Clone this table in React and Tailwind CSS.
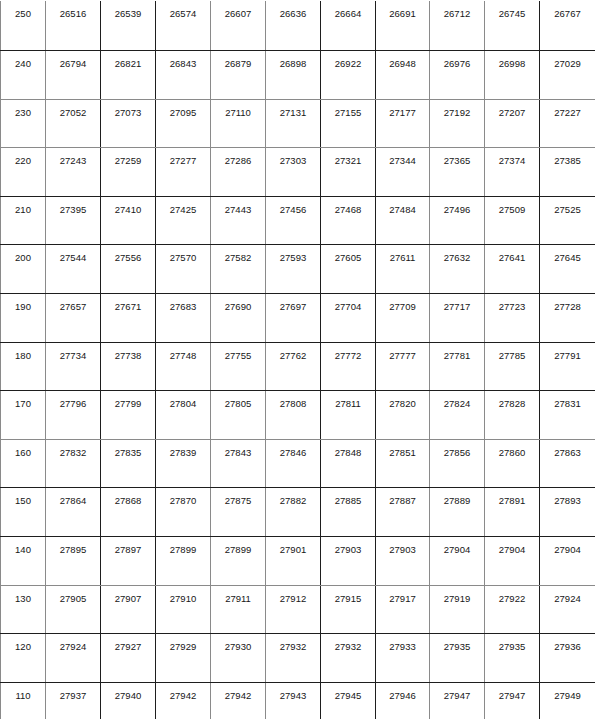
import React from "react";

const data = [
  ["250", "26516", "26539", "26574", "26607", "26636", "26664", "26691", "26712", "26745", "26767"],
  ["240", "26794", "26821", "26843", "26879", "26898", "26922", "26948", "26976", "26998", "27029"],
  ["230", "27052", "27073", "27095", "27110", "27131", "27155", "27177", "27192", "27207", "27227"],
  ["220", "27243", "27259", "27277", "27286", "27303", "27321", "27344", "27365", "27374", "27385"],
  ["210", "27395", "27410", "27425", "27443", "27456", "27468", "27484", "27496", "27509", "27525"],
  ["200", "27544", "27556", "27570", "27582", "27593", "27605", "27611", "27632", "27641", "27645"],
  ["190", "27657", "27671", "27683", "27690", "27697", "27704", "27709", "27717", "27723", "27728"],
  ["180", "27734", "27738", "27748", "27755", "27762", "27772", "27777", "27781", "27785", "27791"],
  ["170", "27796", "27799", "27804", "27805", "27808", "27811", "27820", "27824", "27828", "27831"],
  ["160", "27832", "27835", "27839", "27843", "27846", "27848", "27851", "27856", "27860", "27863"],
  ["150", "27864", "27868", "27870", "27875", "27882", "27885", "27887", "27889", "27891", "27893"],
  ["140", "27895", "27897", "27899", "27899", "27901", "27903", "27903", "27904", "27904", "27904"],
  ["130", "27905", "27907", "27910", "27911", "27912", "27915", "27917", "27919", "27922", "27924"],
  ["120", "27924", "27927", "27929", "27930", "27932", "27932", "27933", "27935", "27935", "27936"],
  ["110", "27937", "27940", "27942", "27942", "27943", "27945", "27946", "27947", "27947", "27949"],
];

const cols = [
  "w-[45px] border-l border-[#8a8a8a]",
  "w-[55px] border-l border-[#8a8a8a]",
  "w-[55px] border-l border-[#1e1e1e]",
  "w-[55px] border-l border-[#1e1e1e]",
  "w-[55px] border-l border-[#8a8a8a]",
  "w-[55px] border-l border-[#8a8a8a]",
  "w-[55px] border-l border-[#1e1e1e]",
  "w-[54px] border-l border-[#1e1e1e]",
  "w-[55px] border-l border-[#8a8a8a]",
  "w-[55px] border-l border-[#8a8a8a]",
  "w-[56px] border-l border-[#1e1e1e]",
];

const rows = [
  "h-[50px] border-t border-transparent",
  "h-[49px] border-t border-[#1e1e1e]",
  "h-[48px] border-t border-[#8a8a8a]",
  "h-[49px] border-t border-[#8a8a8a]",
  "h-[48px] border-t border-[#1e1e1e]",
  "h-[49px] border-t border-[#1e1e1e]",
  "h-[49px] border-t border-[#1e1e1e]",
  "h-[48px] border-t border-[#1e1e1e]",
  "h-[49px] border-t border-[#1e1e1e]",
  "h-[48px] border-t border-[#8a8a8a]",
  "h-[49px] border-t border-[#1e1e1e]",
  "h-[49px] border-t border-[#1e1e1e]",
  "h-[48px] border-t border-[#8a8a8a]",
  "h-[49px] border-t border-[#1e1e1e]",
  "h-[49px] border-t border-[#1e1e1e]",
];

export default function App() {
  return (
    <div
      className="w-[600px] h-[719px] overflow-hidden bg-white text-[#161616]"
      style={{ fontFamily: '"Liberation Sans", Arial, sans-serif' }}
    >
      <div className="w-[595px] flex flex-col">
        {data.map((row, r) => (
          <div key={r} className={"flex shrink-0 " + rows[r]}>
            {row.map((v, c) => (
              <div
                key={c}
                className={"shrink-0 h-full text-center text-[9.5px] leading-[12px] pt-[7px] " + cols[c]}
              >
                {v}
              </div>
            ))}
          </div>
        ))}
      </div>
    </div>
  );
}
